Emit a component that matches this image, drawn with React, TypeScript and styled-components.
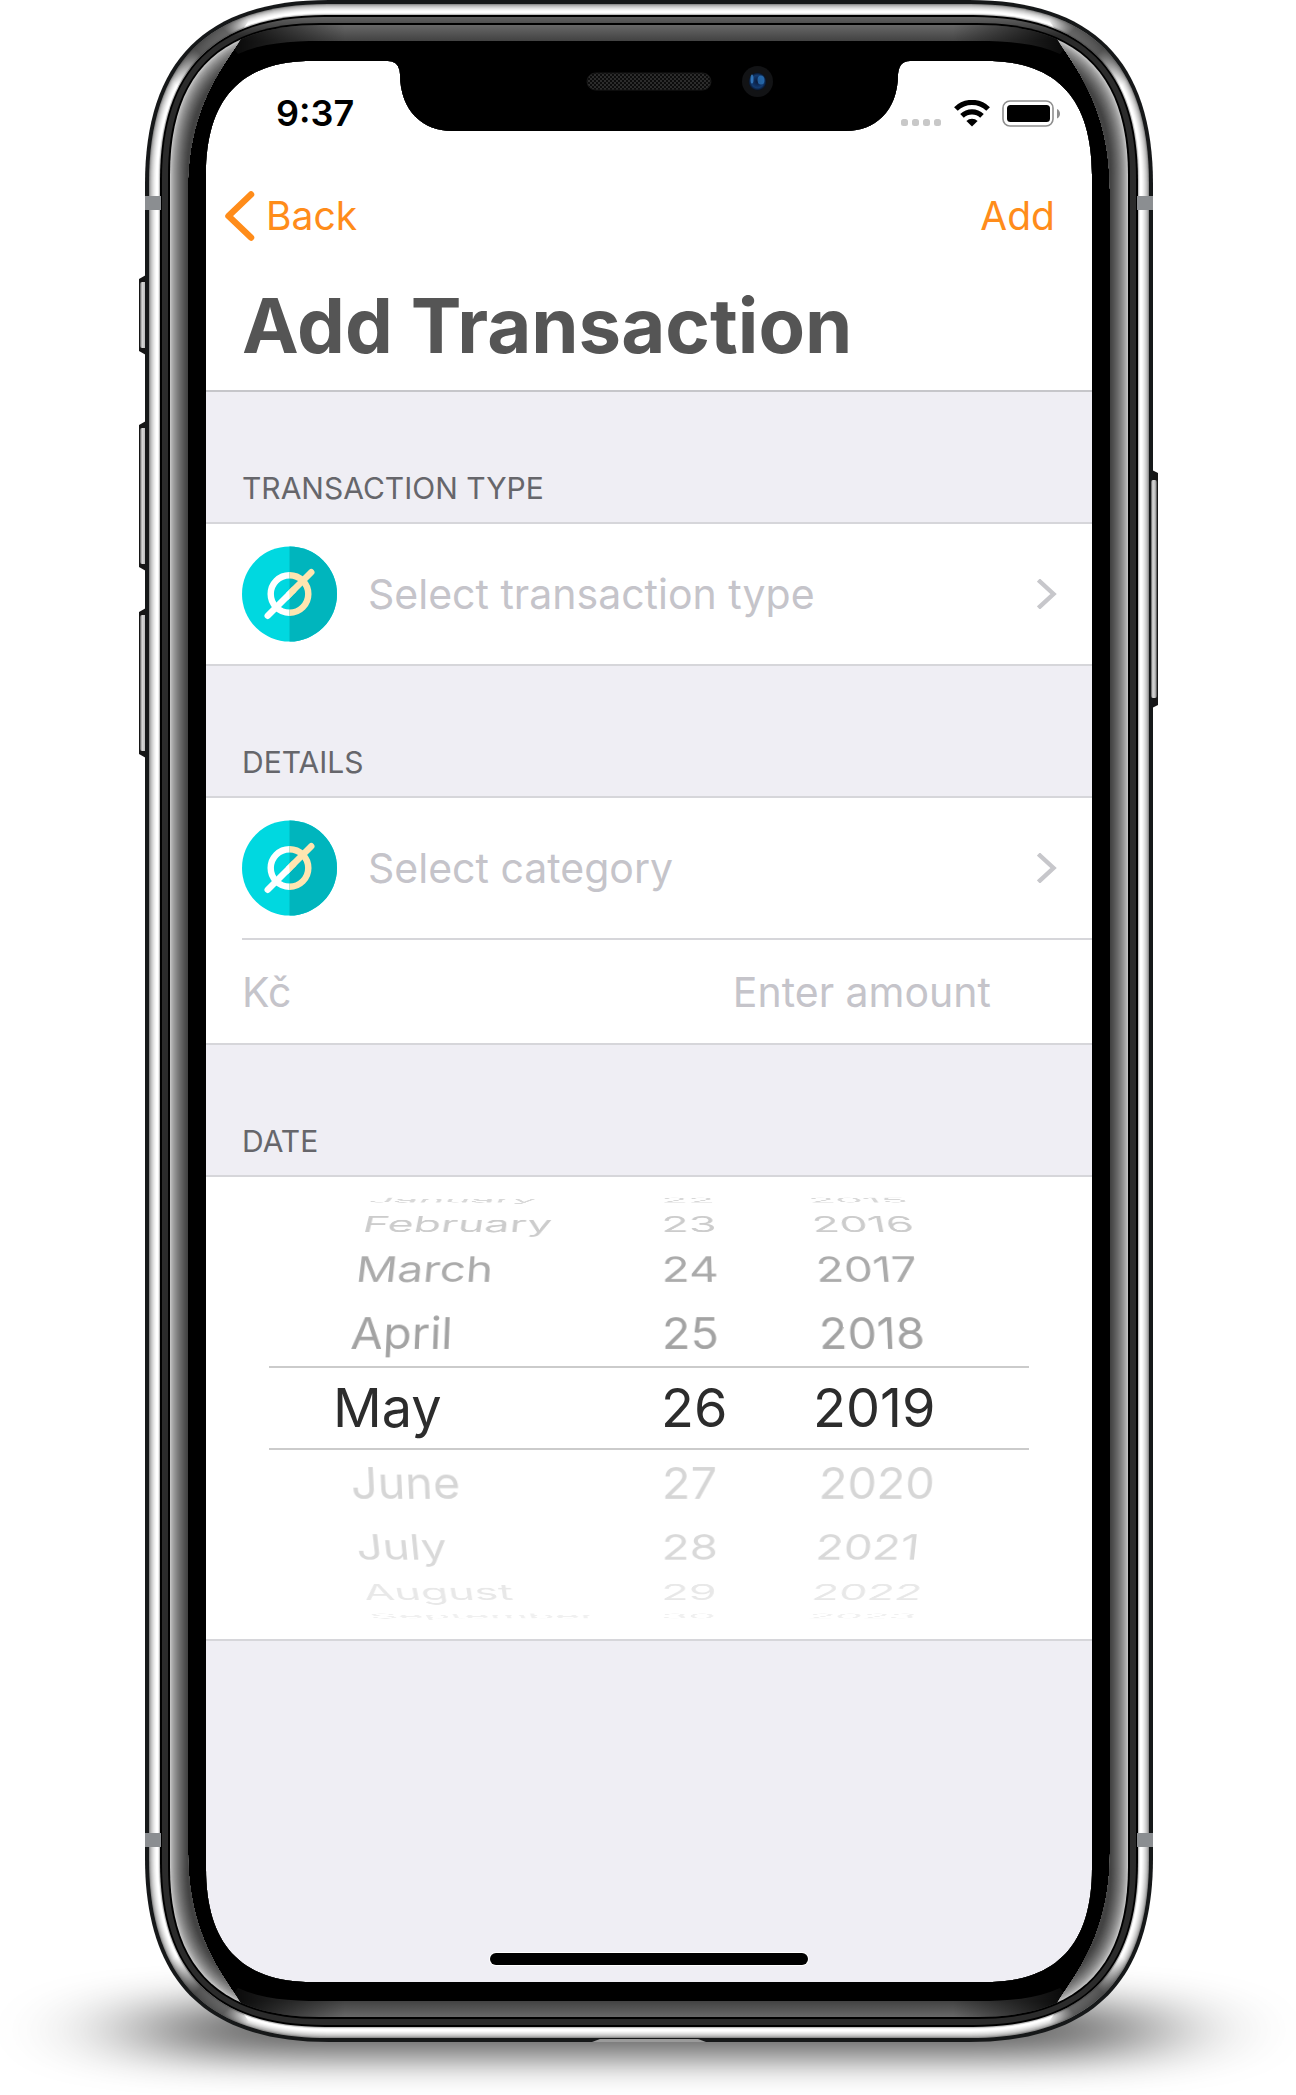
import React from "react";
import styled, { createGlobalStyle } from "styled-components";

const GlobalStyle = createGlobalStyle`
  *, *::before, *::after { box-sizing: border-box; }
  body { margin: 0; background: #fff; }
  button, input { font: inherit; }
`;

const colors = {
  tint: "#ff8c1a",
  title: "#555555",
  label: "#66666b",
  placeholder: "#c5c4ca",
  group: "#efeef4",
  line: "#d6d6da",
};

const Stage = styled.div`
  position: relative;
  overflow: hidden;
  padding: 0 0 53px 2px;
  font-family: Inter, "Liberation Sans", sans-serif;
`;

const ShadowArt = styled.svg`
  position: absolute;
  left: 0;
  bottom: 0;
  width: 100%;
  height: 240px;
`;

const Phone = styled.div`
  position: relative;
  max-width: 1008px;
  margin: 0 auto;
  padding: 61px 61px 60px;
`;

const FrameArt = styled.svg`
  position: absolute;
  top: 0;
  left: -6px;
  width: calc(100% + 12px);
  height: 100%;
  pointer-events: none;
`;

const Screen = styled.main`
  display: flex;
  flex-direction: column;
  min-height: 1921px;
  border-radius: 90px;
  overflow: hidden;
  background: ${colors.group};
`;

const Header = styled.header`
  background: #fff;
  border-bottom: 2px solid #c6c6ca;
`;

const StatusBar = styled.div`
  display: flex;
  justify-content: space-between;
  align-items: center;
  height: 104px;
  padding: 0 32px 0 70px;
`;

const Clock = styled.time`
  font-size: 36px;
  line-height: 44px;
  font-weight: 600;
  color: #000;
`;

const StatusIcons = styled.div`
  display: flex;
  align-items: flex-end;
  gap: 12px;
`;

const NavBar = styled.nav`
  display: flex;
  justify-content: space-between;
  align-items: center;
  height: 102px;
  padding: 0 37px 0 18px;
`;

const NavButton = styled.button`
  display: flex;
  align-items: center;
  gap: 10px;
  padding: 0;
  border: 0;
  background: none;
  color: ${colors.tint};
  font-size: 39px;
  line-height: 48px;
  cursor: pointer;
`;

const Title = styled.h1`
  margin: 0;
  padding: 10px 36px 17px;
  font-size: 76px;
  line-height: 96px;
  font-weight: 700;
  color: ${colors.title};
`;

const SectionTitle = styled.h2`
  margin: 0;
  padding: 77px 36px 15px;
  font-size: 30px;
  line-height: 38px;
  font-weight: 400;
  color: ${colors.label};
`;

const Group = styled.div`
  background: #fff;
  border-top: 2px solid ${colors.line};
  border-bottom: 2px solid ${colors.line};
`;

const SelectRow = styled.button`
  display: flex;
  align-items: center;
  gap: 31px;
  width: 100%;
  height: 140px;
  padding: 0 35px 0 36px;
  border: 0;
  background: none;
  color: ${colors.placeholder};
  font-size: 41px;
  line-height: 48px;
  text-align: left;
  cursor: pointer;
`;

const RowText = styled.span`
  flex: 1;
`;

const Divider = styled.hr`
  height: 2px;
  margin: 0 0 0 36px;
  border: 0;
  background: ${colors.line};
`;

const AmountRow = styled.div`
  display: flex;
  align-items: center;
  justify-content: space-between;
  height: 103px;
  padding: 0 101px 0 36px;
  color: ${colors.placeholder};
  font-size: 41px;
  line-height: 48px;
`;

const AmountInput = styled.input`
  width: 400px;
  padding: 0;
  border: 0;
  outline: 0;
  background: none;
  color: #2c2c2c;
  text-align: right;
  &::placeholder { color: ${colors.placeholder}; opacity: 1; }
`;

const Wheel = styled.ul`
  margin: 0;
  padding: 13px 0;
  list-style: none;
`;

const WheelRow = styled.li<{ $height: number; $tone: string; $angle: number; $depth: number }>`
  display: grid;
  grid-template-columns: 313px 158px 1fr;
  height: ${(p) => p.$height}px;
  padding-left: 143px;
  line-height: ${(p) => p.$height}px;
  font-size: 47px;
  color: ${(p) => p.$tone};
  transform: perspective(2000px) translateZ(-${(p) => p.$depth}px) rotateX(${(p) => p.$angle}deg);
`;

const SelectedRow = styled.li`
  display: grid;
  grid-template-columns: 328px 152px 1fr;
  height: 84px;
  margin: 0 63px;
  padding-left: 64px;
  border-top: 2px solid #cbcbcb;
  border-bottom: 2px solid #cbcbcb;
  line-height: 80px;
  font-size: 54px;
  color: #2c2c2c;
`;

const HomeArea = styled.div`
  display: flex;
  justify-content: center;
  margin-top: auto;
  padding-bottom: 17px;
`;

const HomeBar = styled.div`
  width: 36%;
  height: 12px;
  border-radius: 6px;
  background: #000;
  box-shadow: 0 0 0 1px #fff;
`;

type WheelItem = {
  month: string;
  day: string;
  year: string;
  height: number;
  tone: string;
  angle: number;
  depth: number;
};

const before: WheelItem[] = [
  { month: "January", day: "22", year: "2015", height: 20, tone: "#d8d8d8", angle: 81, depth: 146 },
  { month: "February", day: "23", year: "2016", height: 28, tone: "#cccccc", angle: 60, depth: 99 },
  { month: "March", day: "24", year: "2017", height: 62, tone: "#ababab", angle: 40, depth: 50 },
  { month: "April", day: "25", year: "2018", height: 66, tone: "#a3a3a3", angle: 20, depth: 13 },
];

const after: WheelItem[] = [
  { month: "June", day: "27", year: "2020", height: 66, tone: "#d6d6d6", angle: -20, depth: 13 },
  { month: "July", day: "28", year: "2021", height: 62, tone: "#d9d9d9", angle: -40, depth: 50 },
  { month: "August", day: "29", year: "2022", height: 28, tone: "#e8e8e8", angle: -60, depth: 99 },
  { month: "September", day: "30", year: "2023", height: 20, tone: "#f0f0f0", angle: -81, depth: 146 },
];

const WheelItems = ({ items }: { items: WheelItem[] }) => (
  <>
    {items.map((item) => (
      <WheelRow
        key={item.month}
        $height={item.height}
        $tone={item.tone}
        $angle={item.angle}
        $depth={item.depth}
      >
        <span>{item.month}</span>
        <span>{item.day}</span>
        <span>{item.year}</span>
      </WheelRow>
    ))}
  </>
);

const EmptyIcon = () => (
  <svg width="95" height="96" viewBox="0 0 96 96" aria-hidden="true">
    <circle cx="48" cy="48" r="48" fill="#00d8e0" />
    <path d="M48 0a48 48 0 0 1 0 96z" fill="#00b5bd" />
    <g fill="none" strokeLinecap="round">
      <path d="M48 29a19 19 0 0 0 0 38" stroke="#fff" strokeWidth="6.5" strokeLinecap="butt" />
      <path d="M48 29a19 19 0 0 1 0 38" stroke="#ffe5b0" strokeWidth="6.5" strokeLinecap="butt" />
      <path d="M26 70L48 48" stroke="#fff" strokeWidth="6.5" />
      <path d="M50 46L70 26" stroke="#ffe5b0" strokeWidth="6.5" />
      <path d="M44.7 46.7L48 43.4V52.6L46 54.6z" fill="#fff" />
      <path d="M48 43.4L51 40.5 55 45.6 48 52.6z" fill="#ffe5b0" />
    </g>
  </svg>
);

const RowChevron = () => (
  <svg width="20" height="30" viewBox="0 0 20 30" aria-hidden="true">
    <path d="M3 2.500L16.500 15 3 27.500" fill="none" stroke="#c7c7cb" strokeWidth="4.400" strokeLinecap="square" />
  </svg>
);

const BackChevron = () => (
  <svg width="32" height="50" viewBox="0 0 32 50" aria-hidden="true">
    <path d="M27 3.500L4.500 25L27 46.500" fill="none" stroke={colors.tint} strokeWidth="6.500" strokeLinecap="round" strokeLinejoin="round" />
  </svg>
);

const SignalIcon = () => (
  <svg width="41" height="27" viewBox="0 0 41 27" aria-hidden="true" fill="#c8c8c8">
    {[0, 11, 22, 33].map((x) => (
      <rect key={x} x={x} y="19" width="7" height="7" rx="2.500" />
    ))}
  </svg>
);

const WifiIcon = () => (
  <svg width="36" height="27" viewBox="0 0 36 27" aria-hidden="true">
    <g fill="none" stroke="#000" strokeWidth="5.200">
      <path d="M1.900 9a23 23 0 0 1 32.200 0" />
      <path d="M8 15.800a14.600 14.600 0 0 1 20 0" />
    </g>
    <path d="M12.400 21a8 8 0 0 1 11.200 0L18 26.600z" />
  </svg>
);

const BatteryIcon = () => (
  <svg width="58" height="27" viewBox="0 0 58 27" aria-hidden="true">
    <rect x="1" y="1" width="50" height="25" rx="7" fill="#fff" stroke="#8e8e8e" strokeWidth="1.600" />
    <rect x="5" y="5" width="43" height="17" rx="3.500" />
    <path d="M55 9c4 1.500 4 8 0 9.500z" fill="#8e8e8e" />
  </svg>
);

/* Continuous-curvature rounded rectangle, inset evenly from the phone's edge. */
const shell = (inset: number, s: number) => {
  const l = 145 + inset;
  const r = 1153 - inset;
  const t = inset;
  const b = 2042 - inset;
  const k = s * 0.33;
  return (
    `M${l} ${t + s}C${l} ${t + k} ${l + k} ${t} ${l + s} ${t}H${r - s}` +
    `C${r - k} ${t} ${r} ${t + k} ${r} ${t + s}V${b - s}` +
    `C${r} ${b - k} ${r - k} ${b} ${r - s} ${b}H${l + s}` +
    `C${l + k} ${b} ${l} ${b - k} ${l} ${b - s}Z`
  );
};

const screenPath =
  "M206 175C206 100 240 61 312 61H388Q399 61 400 74C400 112 424 131 452 131H846" +
  "C874 131 898 112 898 74Q899 61 910 61H986C1058 61 1092 100 1092 175V1868" +
  "C1092 1943 1058 1982 986 1982H312C240 1982 206 1943 206 1868Z";

const corners = [
  undefined,
  "translate(1298 0) scale(-1 1)",
  "translate(0 2042) scale(1 -1)",
  "translate(1298 2042) scale(-1 -1)",
];

const sideButtons = [
  { x: 139, y: 276, h: 78 },
  { x: 139, y: 422, h: 148 },
  { x: 139, y: 609, h: 148 },
];

/* Steel band, shaded from its outer edge inwards. */
const steelTones = ["#8f8f8f", "#b0b0b0", "#c4c4c4", "#d4d4d4", "#e2e2e2", "#eeeeee", "#f8f8f8", "#ffffff", "#ffffff", "#eeeeee"];

/* Curved glass edge, bright at the rim and dark toward the display. */
const glassTones = [
  "#c2c2c2", "#b4b4b4", "#a9a9a9", "#9f9f9f", "#969696", "#8e8e8e", "#868686", "#7e7e7e", "#777777",
  "#707070", "#696969", "#636363", "#5d5d5d", "#575757", "#515151", "#4c4c4c", "#474747", "#434343",
];

const PhoneFrame = () => (
  <FrameArt viewBox="139 0 1020 2042" preserveAspectRatio="none" aria-hidden="true">
    <defs>
      <clipPath id="body">
        <path d={"M0 -10H1300V2060H0Z" + screenPath} clipRule="evenodd" />
      </clipPath>
      <clipPath id="glass"><path d={shell(25, 150)} /></clipPath>
      <clipPath id="steel">
        <path d={shell(4, 179) + shell(15, 165)} clipRule="evenodd" />
      </clipPath>
      <clipPath id="glint">
        {corners.map((t, i) => (
          <path key={i} transform={t} d="M165 1022V30H243L241 39C223 66 188 108 188 190V1022Z" />
        ))}
      </clipPath>
      <linearGradient id="cap" gradientUnits="userSpaceOnUse" x1="0" x2="0" y1="25" y2="41">
        <stop offset="0" stopColor="#686868" />
        <stop offset="1" stopColor="#424242" />
      </linearGradient>
      <linearGradient id="fade" gradientUnits="userSpaceOnUse" x1="235" x2="345" y1="0" y2="0">
        <stop offset="0" stopColor="#000" stopOpacity="0.85" />
        <stop offset="1" stopColor="#000" stopOpacity="0" />
      </linearGradient>
      <linearGradient id="rim" gradientUnits="userSpaceOnUse" x1="0" x2="0" y1="17" y2="36">
        <stop offset="0" stopColor="#616161" />
        <stop offset="1" stopColor="#2b2b2b" />
      </linearGradient>
      <linearGradient id="dark" gradientUnits="userSpaceOnUse" x1="176" x2="245" y1="85" y2="16">
        <stop offset="0" stopColor="#3a3a3a" stopOpacity="0" />
        <stop offset="0.4" stopColor="#3a3a3a" stopOpacity="0.85" />
        <stop offset="0.75" stopColor="#4a4a4a" stopOpacity="0.85" />
        <stop offset="1" stopColor="#4a4a4a" stopOpacity="0" />
      </linearGradient>
      <linearGradient id="key" x1="0" x2="1" y1="0" y2="0">
        <stop offset="0" stopColor="#555" />
        <stop offset="0.3" stopColor="#d8d8d8" />
        <stop offset="0.7" stopColor="#bdbdbd" />
        <stop offset="1" stopColor="#444" />
      </linearGradient>
      <radialGradient id="lens" cx="0.5" cy="0.5" r="0.5">
        <stop offset="0" stopColor="#0a1838" />
        <stop offset="0.7" stopColor="#123a70" />
        <stop offset="1" stopColor="#071020" />
      </radialGradient>
      <pattern id="mesh" width="4" height="4" patternUnits="userSpaceOnUse">
        <rect width="4" height="4" fill="#0c0c0c" />
        <rect width="2" height="2" fill="#2c2c2c" />
        <rect x="2" y="2" width="2" height="2" fill="#2c2c2c" />
      </pattern>
    </defs>

    {sideButtons.map((b) => (
      <g key={b.y}>
        <path d={`M${b.x} ${b.y + 3}L${b.x + 7} ${b.y - 1}V${b.y + b.h + 1}L${b.x} ${b.y + b.h - 3}Z`} fill="#161616" />
        <rect x={b.x + 1} y={b.y + 6} width="7" height={b.h - 12} rx="2" fill="url(#key)" />
      </g>
    ))}
    <path d="M1158 473L1152 470V708L1158 705Z" fill="#161616" />

    <g clipPath="url(#body)">
      <path d={shell(0, 184)} fill="#161819" />
      {steelTones.map((tone, i) => (
        <path key={i} d={shell(4 + i, 179 - i)} fill={tone} />
      ))}
      <path d={shell(14, 166)} fill="#bdbdbd" />
      <g clipPath="url(#steel)">
        {corners.map((t, i) => (
          <path key={i} transform={t} d="M150 95L182 20 262 0 240 34 176 95Z" fill="url(#dark)" />
        ))}
      </g>
      <path d={shell(15, 165)} fill="#000" />
      <path d={shell(17, 162)} fill="url(#rim)" />
      <path d={shell(23, 153)} fill="#000" />
      <g clipPath="url(#glass)">
        {corners.map((t, i) => (
          <g key={i} transform={t}>
            <path d="M210 20H650V41H320C290 41 262 43 238 54Z" fill="url(#cap)" />
            <path d="M205 15H350V60H205Z" fill="url(#fade)" />
          </g>
        ))}
      </g>
      <g clipPath="url(#glint)">
        {glassTones.map((tone, i) => (
          <path key={i} d={shell(25 + i, 150 - i)} fill={tone} />
        ))}
      </g>
      <g fill="#8b8e91">
        <rect x="145" y="196" width="16" height="14" />
        <rect x="1137" y="196" width="16" height="14" />
        <rect x="145" y="1833" width="16" height="14" />
        <rect x="1137" y="1833" width="16" height="14" />
      </g>
      <path d="M592 2042L600 2039H698L706 2042Z" fill="#9a9a9a" />
    </g>
    <rect x="1151" y="480" width="6" height="218" rx="2" fill="url(#key)" />

    <rect x="587" y="73" width="124" height="17" rx="8.500" fill="url(#mesh)" stroke="#181818" />
    <circle cx="757.500" cy="81.500" r="15.500" fill="#121315" />
    <circle cx="757.500" cy="81.500" r="9" fill="url(#lens)" />
    <ellipse cx="752" cy="79" rx="1.500" ry="4.500" fill="#3f8fd8" opacity="0.7" />
    <ellipse cx="761" cy="80" rx="3.500" ry="4.500" fill="#2f7fc8" opacity="0.65" />
  </FrameArt>
);

export default function App() {
  return (
    <Stage>
      <GlobalStyle />
      <ShadowArt viewBox="0 0 1296 240" preserveAspectRatio="none" aria-hidden="true">
        <defs>
          <filter id="soft" x="-30%" y="-150%" width="160%" height="400%">
            <feGaussianBlur stdDeviation="72 18" />
          </filter>
        </defs>
        <rect x="150" y="148" width="998" height="54" rx="27" fill="#000" opacity="0.64" filter="url(#soft)" />
      </ShadowArt>
      <Phone>
        <Screen>
          <Header>
            <StatusBar>
              <Clock>9:37</Clock>
              <StatusIcons>
                <SignalIcon />
                <WifiIcon />
                <BatteryIcon />
              </StatusIcons>
            </StatusBar>
            <NavBar>
              <NavButton type="button">
                <BackChevron />
                Back
              </NavButton>
              <NavButton type="button">Add</NavButton>
            </NavBar>
            <Title>Add Transaction</Title>
          </Header>

          <SectionTitle>TRANSACTION TYPE</SectionTitle>
          <Group>
            <SelectRow type="button">
              <EmptyIcon />
              <RowText>Select transaction type</RowText>
              <RowChevron />
            </SelectRow>
          </Group>

          <SectionTitle>DETAILS</SectionTitle>
          <Group>
            <SelectRow type="button">
              <EmptyIcon />
              <RowText>Select category</RowText>
              <RowChevron />
            </SelectRow>
            <Divider />
            <AmountRow>
              <label htmlFor="amount">Kč</label>
              <AmountInput id="amount" type="text" inputMode="decimal" placeholder="Enter amount" />
            </AmountRow>
          </Group>

          <SectionTitle>DATE</SectionTitle>
          <Group>
            <Wheel aria-label="Date">
              <WheelItems items={before} />
              <SelectedRow aria-current="date">
                <span>May</span>
                <span>26</span>
                <span>2019</span>
              </SelectedRow>
              <WheelItems items={after} />
            </Wheel>
          </Group>

          <HomeArea>
            <HomeBar />
          </HomeArea>
        </Screen>
        <PhoneFrame />
      </Phone>
    </Stage>
  );
}
